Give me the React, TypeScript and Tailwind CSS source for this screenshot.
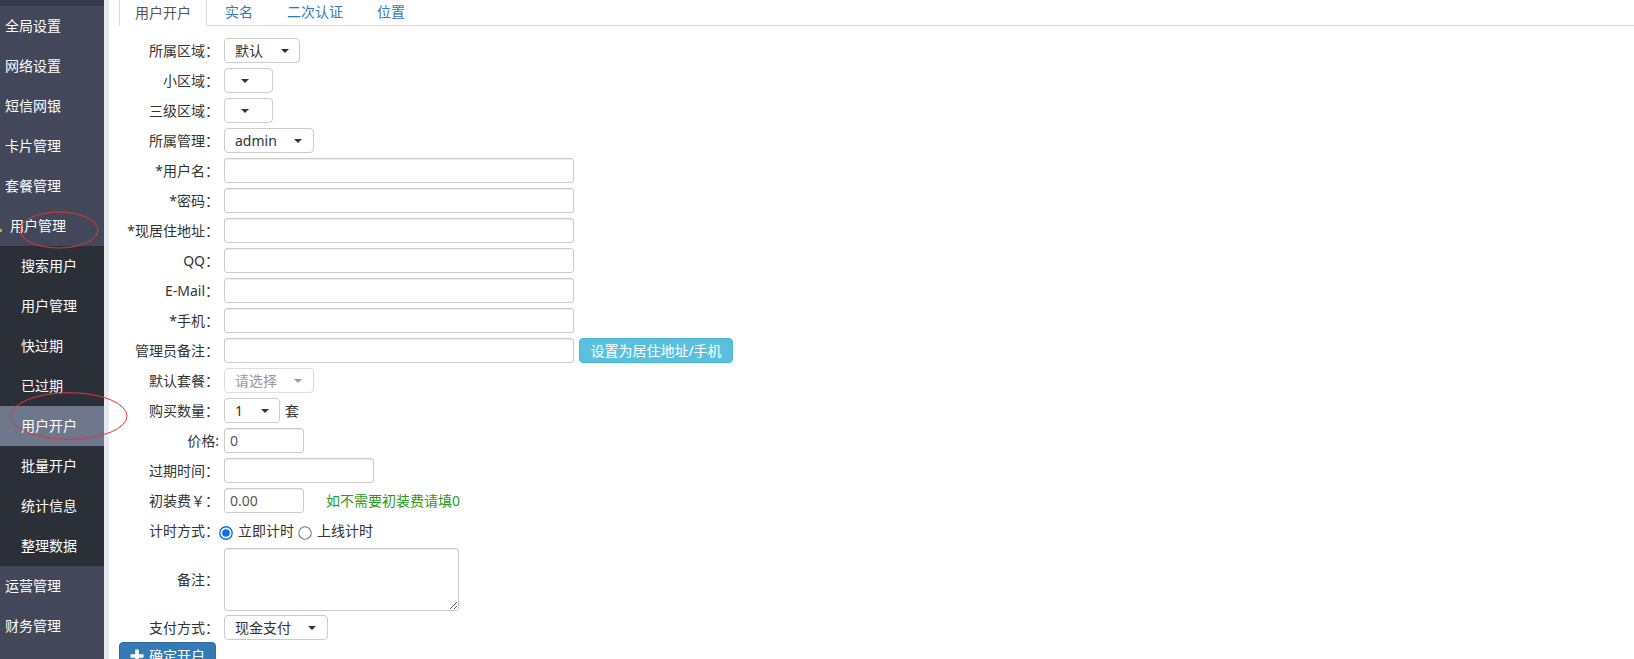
import React from "react";

const FONT = { fontFamily: '"Noto Sans", "Noto Sans CJK SC", sans-serif' };

function Caret({ left, grey }: { left: number; grey?: boolean }) {
  return (
    <span
      className={`absolute top-1/2 -translate-y-1/2 h-0 w-0 border-x-[4px] border-t-[4px] border-x-transparent ${grey ? "border-t-[#999]" : "border-t-[#333]"}`}
      style={{ left }}
    />
  );
}

function Select({ w, text, caret, disabled }: { w: string; text?: string; caret: number; disabled?: boolean }) {
  return (
    <div
      className={`relative flex h-[25px] items-center rounded-[4px] border bg-white pl-[10px] text-[14px] ${w} ${disabled ? "border-[#ddd] text-[#999]" : "border-[#ccc] text-[#333]"}`}
    >
      <span className="leading-none">{text}</span>
      <Caret left={caret} grey={disabled} />
    </div>
  );
}

function Input({ w, value }: { w: string; value?: string }) {
  return (
    <div className={`flex h-[25px] items-center rounded-[3px] border border-[#ccc] bg-white pl-[5px] text-[14px] text-[#555] shadow-[inset_0_1px_1px_rgba(0,0,0,0.075)] ${w}`}>
      {value}
    </div>
  );
}

function Row({ label, children, h }: { label: string; children?: React.ReactNode; h?: string }) {
  return (
    <div className={`flex items-center ${h ?? "h-[25px]"}`}>
      <div className="w-[100px] shrink-0 whitespace-nowrap text-right text-[14px] text-[#333]">{label}</div>
      <div className="ml-[5px] flex items-center">{children}</div>
    </div>
  );
}

function Radio({ checked }: { checked?: boolean }) {
  return (
    <svg width="14" height="14" viewBox="0 0 14 14" className="shrink-0">
      {checked ? (
        <>
          <circle cx="7" cy="7" r="6.2" fill="#fff" stroke="#0b6fe8" strokeWidth="1.4" />
          <circle cx="7" cy="7" r="3.8" fill="#0b6fe8" />
        </>
      ) : (
        <circle cx="7" cy="7" r="6.2" fill="#fff" stroke="#767676" strokeWidth="1.1" />
      )}
    </svg>
  );
}

const topItems1 = ["全局设置", "网络设置", "短信网银", "卡片管理", "套餐管理"];
const subItems = ["搜索用户", "用户管理", "快过期", "已过期", "用户开户", "批量开户", "统计信息", "整理数据"];
const topItems2 = ["运营管理", "财务管理"];

export default function App() {
  return (
    <div className="relative flex h-[659px] w-[1634px] overflow-hidden bg-white" style={FONT}>
      <aside className="flex w-[104px] shrink-0 flex-col bg-[#424859] text-[14px] text-white">
        <div className="h-[6px] bg-[#353a48]" />
        {topItems1.map((t) => (
          <div key={t} className="flex h-[40px] items-center pb-[2px] pl-[5px]">
            {t}
          </div>
        ))}
        <div className="relative flex h-[40px] items-center pb-[2px] pl-[10px]">
          <span className="absolute left-0 top-[23px] h-[3px] w-[2px] bg-[#e0a030]" />
          用户管理
        </div>
        <div className="bg-[#2a2f38]">
          {subItems.map((t) => (
            <div
              key={t}
              className={`flex h-[40px] items-center pb-[2px] pl-[21px] ${t === "用户开户" ? "bg-[#6e778c]" : ""}`}
            >
              {t}
            </div>
          ))}
        </div>
        {topItems2.map((t) => (
          <div key={t} className="flex h-[40px] items-center pb-[2px] pl-[5px]">
            {t}
          </div>
        ))}
      </aside>
      <div className="w-[5px] shrink-0 bg-[#e6e9ee]" />
      <main className="flex-1 pl-[10px]">
        <ul className="flex h-[26px] border-b border-[#ddd] text-[14px]">
          <li className="-mb-px flex h-[26px] items-center border-x border-[#ddd] bg-white px-[15px] pb-[2px] text-[#555]">
            用户开户
          </li>
          <li className="ml-[2px] flex items-center border-x border-transparent px-[15px] pb-[2px] text-[#337ab7]">实名</li>
          <li className="ml-[2px] flex items-center border-x border-transparent px-[15px] pb-[2px] text-[#337ab7]">二次认证</li>
          <li className="ml-[2px] flex items-center border-x border-transparent px-[15px] pb-[2px] text-[#337ab7]">位置</li>
        </ul>
        <div className="flex flex-col gap-[5px] pt-[12px]">
          <Row label="所属区域：">
            <Select w="w-[76px]" text="默认" caret={56} />
          </Row>
          <Row label="小区域：">
            <Select w="w-[49px]" caret={16} />
          </Row>
          <Row label="三级区域：">
            <Select w="w-[49px]" caret={16} />
          </Row>
          <Row label="所属管理：">
            <Select w="w-[90px]" text="admin" caret={69} />
          </Row>
          <Row label="*用户名：">
            <Input w="w-[350px]" />
          </Row>
          <Row label="*密码：">
            <Input w="w-[350px]" />
          </Row>
          <Row label="*现居住地址：">
            <Input w="w-[350px]" />
          </Row>
          <Row label="QQ：">
            <Input w="w-[350px]" />
          </Row>
          <Row label="E-Mail：">
            <Input w="w-[350px]" />
          </Row>
          <Row label="*手机：">
            <Input w="w-[350px]" />
          </Row>
          <Row label="管理员备注：">
            <Input w="w-[350px]" />
            <button className="ml-[5px] flex h-[25px] w-[154px] items-center justify-center rounded-[4px] border border-[#46b8da] bg-[#5bc0de] text-[14px] text-white">
              设置为居住地址/手机
            </button>
          </Row>
          <Row label="默认套餐：">
            <Select w="w-[90px]" text="请选择" caret={69} disabled />
          </Row>
          <Row label="购买数量：">
            <Select w="w-[56px]" text="1" caret={36} />
            <span className="ml-[5px] text-[14px] text-[#333]">套</span>
          </Row>
          <Row label="价格:">
            <Input w="w-[80px]" value="0" />
          </Row>
          <Row label="过期时间：">
            <Input w="w-[150px]" />
          </Row>
          <Row label="初装费￥：">
            <Input w="w-[80px]" value="0.00" />
            <span className="ml-[22px] text-[14px] text-[#2a9a22]">如不需要初装费请填0</span>
          </Row>
          <div className="flex h-[25px] items-center">
            <div className="w-[100px] shrink-0 text-right text-[14px] text-[#333]">计时方式：</div>
            <div className="flex items-center text-[14px] text-[#333]">
              <span className="mt-[4px]">
                <Radio checked />
              </span>
              <span className="ml-[5px]">立即计时</span>
              <span className="ml-[4px] mt-[4px]">
                <Radio />
              </span>
              <span className="ml-[5px]">上线计时</span>
            </div>
          </div>
          <Row label="备注：" h="h-[63px]">
            <textarea className="h-[63px] w-[235px] rounded-[3px] border border-[#ccc] bg-white shadow-[inset_0_1px_1px_rgba(0,0,0,0.075)]" />
          </Row>
          <div className="-mt-px">
            <Row label="支付方式：">
              <Select w="w-[104px]" text="现金支付" caret={83} />
            </Row>
          </div>
          <div className="-mt-[3px]">
            <button className="flex h-[27px] w-[97px] items-center rounded-[4px] border border-[#2e6da4] bg-[#337ab7] pl-[10px] text-[14px] text-white">
              <svg width="14" height="14" viewBox="0 0 14 14" className="mr-[5px]">
                <path d="M5.2 0.5h3.6v4.7h4.7v3.6H8.8v4.7H5.2V8.8H0.5V5.2h4.7z" fill="#fff" />
              </svg>
              确定开户
            </button>
          </div>
        </div>
      </main>
      <svg className="pointer-events-none absolute left-0 top-0" width="1634" height="659">
        <ellipse cx="59" cy="230" rx="39" ry="18" fill="none" stroke="#e0383c" strokeWidth="1" />
        <ellipse cx="69" cy="416" rx="58" ry="23.3" fill="none" stroke="#e0383c" strokeWidth="1" />
      </svg>
    </div>
  );
}
